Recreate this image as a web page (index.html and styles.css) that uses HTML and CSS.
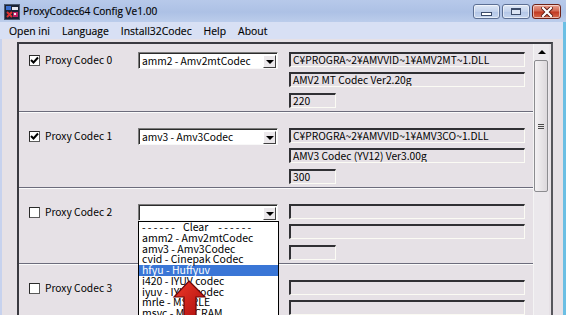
FILE: index.html
```html
<!DOCTYPE html>
<html lang="ja">
<head>
  <meta charset="UTF-8">
  <title>ProxyCodec64 Config Ve1.00</title>
  <link rel="stylesheet" href="styles.css">
</head>
<body>
  <div class="window">
    <div class="titlebar">
      <svg class="app-icon" width="16" height="16" viewBox="0 0 16 16">
        <rect x="0.5" y="0.5" width="15" height="15" fill="#1c2436" stroke="#4a5870"/>
        <rect x="2" y="2" width="5" height="4" fill="#3a6fd0"/>
        <rect x="8" y="3" width="6" height="3" fill="#e8e8f0"/>
        <path d="M3 8 L8 13 M8 8 L3 13" stroke="#e03030" stroke-width="2"/>
        <rect x="9" y="8" width="5" height="5" fill="#c02060"/>
        <rect x="10" y="9" width="2" height="2" fill="#f0f0f0"/>
      </svg>
      <span class="title">ProxyCodec64 Config Ve1.00</span>
      <div class="caption">
        <div class="cap-btn cap-min"><span class="min-bar"></span></div>
        <div class="cap-btn cap-max"><span class="max-box"></span></div>
        <div class="cap-btn cap-close">
          <svg width="12" height="10" viewBox="0 0 12 10">
            <path d="M2 1 L10 9 M10 1 L2 9" stroke="#5a1a12" stroke-width="4" stroke-linecap="square"/>
            <path d="M2 1 L10 9 M10 1 L2 9" stroke="#fff" stroke-width="2.2" stroke-linecap="square"/>
          </svg>
        </div>
      </div>
    </div>

    <div class="menubar">
      <span class="menu-item">Open ini</span>
      <span class="menu-item">Language</span>
      <span class="menu-item">Install32Codec</span>
      <span class="menu-item">Help</span>
      <span class="menu-item">About</span>
    </div>

    <div class="client">
      <div class="panel">
        <div class="codec-list">

          <div class="codec">
            <div class="codec-name"><span class="check on"><svg width="9" height="9" viewBox="0 0 9 9"><path d="M1 4 L3.5 6.5 L8 1.5" fill="none" stroke="#000" stroke-width="2"/></svg></span>Proxy Codec 0</div>
            <div class="combo"><span class="combo-text">amm2 - Amv2mtCodec</span><span class="combo-btn"><i></i></span></div>
            <div class="info">
              <div class="field">C¥PROGRA~2¥AMVVID~1¥AMV2MT~1.DLL</div>
              <div class="field">AMV2 MT Codec Ver2.20g</div>
              <div class="field short">220</div>
            </div>
          </div>

          <div class="codec">
            <div class="codec-name"><span class="check on"><svg width="9" height="9" viewBox="0 0 9 9"><path d="M1 4 L3.5 6.5 L8 1.5" fill="none" stroke="#000" stroke-width="2"/></svg></span>Proxy Codec 1</div>
            <div class="combo"><span class="combo-text">amv3 - Amv3Codec</span><span class="combo-btn"><i></i></span></div>
            <div class="info">
              <div class="field">C¥PROGRA~2¥AMVVID~1¥AMV3CO~1.DLL</div>
              <div class="field">AMV3 Codec (YV12) Ver3.00g</div>
              <div class="field short">300</div>
            </div>
          </div>

          <div class="codec">
            <div class="codec-name"><span class="check"></span>Proxy Codec 2</div>
            <div class="combo open">
              <span class="combo-text"></span><span class="combo-btn"><i></i></span>
              <ul class="dropdown">
                <li class="sep"><span class="dash">------</span><span class="clear">Clear</span><span class="dash">------</span></li>
                <li>amm2 - Amv2mtCodec</li>
                <li>amv3 - Amv3Codec</li>
                <li>cvid - Cinepak Codec</li>
                <li class="selected">hfyu - Huffyuv</li>
                <li>i420 - IYUV codec</li>
                <li>iyuv - IYUV codec</li>
                <li>mrle - MS-RLE</li>
                <li>msvc - MS-CRAM</li>
              </ul>
            </div>
            <div class="info">
              <div class="field"></div>
              <div class="field"></div>
              <div class="field short"></div>
            </div>
          </div>

          <div class="codec">
            <div class="codec-name"><span class="check"></span>Proxy Codec 3</div>
            <div class="combo"><span class="combo-text"></span><span class="combo-btn"><i></i></span></div>
            <div class="info">
              <div class="field"></div>
              <div class="field"></div>
              <div class="field short"></div>
            </div>
          </div>

        </div>
        <div class="vscroll">
          <div class="sb-up"><i></i></div>
          <div class="sb-thumb"><span></span><span></span><span></span></div>
        </div>
      </div>
    </div>

    <!-- pointer arrow drawn over the list -->
    <svg class="pointer" width="36" height="40" viewBox="0 0 36 40">
      <defs>
        <linearGradient id="arrowFill" x1="0" y1="0" x2="1" y2="1">
          <stop offset="0" stop-color="#f03a2a"/>
          <stop offset="1" stop-color="#a80c0c"/>
        </linearGradient>
      </defs>
      <path d="M17 1 L33 17 L24 17 L24 40 L12 40 L12 17 L2 17 Z" fill="url(#arrowFill)" stroke="#6a0505" stroke-width="1.2"/>
    </svg>
  </div>
</body>
</html>
```

FILE: styles.css
```css
* { box-sizing: border-box; }
html, body {
  margin: 0;
  padding: 0;
  overflow: hidden;
}
body {
  width: 566px;
  height: 315px;
  background: #e6e1e6;
}

.window {
  position: relative;
  width: 566px;
  height: 315px;
  overflow: hidden;
  font-family: "Open Sans", "Noto Sans", sans-serif;
}

/* title bar */
.titlebar {
  height: 22px;
  display: flex;
  align-items: center;
  padding-left: 4px;
  background: linear-gradient(to bottom, #b7c9ea 0%, #adc1e5 55%, #bccdeb 100%);
}
.app-icon {
  display: block;
  margin-top: 1px;
}
.title {
  margin-left: 3px;
  font-size: 10.1px;
  color: #000;
  -webkit-text-stroke: 0.15px #000;
}
.caption {
  margin-left: auto;
  margin-right: 5px;
  display: flex;
  gap: 2px;
  align-self: flex-start;
  margin-top: 4px;
}
.cap-btn {
  width: 27px;
  height: 15px;
  border: 1px solid #5c6f93;
  border-radius: 3px;
  background: linear-gradient(to bottom, #dfe8f6 0%, #c3d2ec 50%, #b2c5e6 51%, #c6d6ef 100%);
  box-shadow: inset 0 0 0 1px rgba(255, 255, 255, 0.55);
  display: flex;
  align-items: center;
  justify-content: center;
}
.cap-max { width: 28px; }
.cap-close {
  width: 29px;
  border-color: #6e2218;
  background: linear-gradient(to bottom, #eaa090 0%, #d36a54 45%, #c23a22 55%, #d86a4c 100%);
}
.min-bar {
  width: 11px;
  height: 4px;
  margin-top: 4px;
  background: #fff;
  border: 1px solid #3c4c6a;
}
.max-box {
  width: 10px;
  height: 7px;
  border: 1px solid #3c4c6a;
  border-top-width: 2px;
  background: #dbe4f4;
}

/* menu bar */
.menubar {
  height: 17px;
  display: flex;
  align-items: center;
  padding-left: 3px;
  background: #d8e0f4;
  border-right: 3px solid #6bbfe4;
}
.menu-item {
  padding: 0 6px;
  font-size: 10.4px;
  color: #000;
  -webkit-text-stroke: 0.15px #000;
}

/* client */
.client {
  height: 276px;
  padding: 3px 10px 0 15px;
  background: #e6e1e6;
  border-left: 2px solid #c7d2ee;
  border-right: 3px solid #6bbfe4;
}
.panel {
  height: 100%;
  display: flex;
  border-top: 2px solid #3a3a40;
  border-left: 2px solid #3a3a40;
  border-right: 2px solid #56565c;
  padding-right: 2px;
  overflow: hidden;
  font-family: "Noto Sans CJK JP", "Liberation Sans", sans-serif;
  font-size: 10.25px;
  color: #000;
}
.codec-list {
  flex: 1;
  margin-top: -8px;
}
.codec {
  height: 76px;
  display: flex;
  align-items: flex-start;
  padding: 16px 0 0 10px;
  border-bottom: 1px solid #6c6c7c;
  box-shadow: 0 1px 0 #fbfbfb;
}
.codec-name {
  width: 109px;
  display: flex;
  align-items: center;
  gap: 5px;
  margin-top: 2px;
  height: 12px;
  line-height: 12px;
  white-space: nowrap;
}
.check {
  width: 11px;
  height: 11px;
  background: #fff;
  border: 1px solid #5a5a5a;
  border-top-color: #2a2a2a;
  border-left-color: #2a2a2a;
  display: flex;
  align-items: center;
  justify-content: center;
}
.check svg { display: block; }

/* combo box */
.combo {
  position: relative;
  width: 140px;
  height: 17px;
  margin-right: 11px;
  background: #fff;
  border-top: 1px solid #7c7c7c;
  border-left: 1px solid #7c7c7c;
  border-right: 1px solid #f8f8f8;
  border-bottom: 1px solid #f8f8f8;
  box-shadow: inset 1px 1px 0 #2c2c2c;
  display: flex;
  align-items: center;
}
.combo-text {
  flex: 1;
  padding-left: 3px;
  line-height: 13px;
  white-space: nowrap;
}
.combo-btn {
  width: 13px;
  height: 13px;
  margin-right: 1px;
  margin-top: 1px;
  background: #ebe8eb;
  border-top: 1px solid #fff;
  border-left: 1px solid #fff;
  border-right: 1px solid #404040;
  border-bottom: 1px solid #404040;
  display: flex;
  align-items: center;
  justify-content: center;
}
.combo-btn i {
  width: 0;
  height: 0;
  border-left: 4px solid transparent;
  border-right: 4px solid transparent;
  border-top: 4px solid #000;
  margin-top: 1px;
}
.dropdown {
  position: absolute;
  top: 16px;
  left: -1px;
  width: 141px;
  margin: 0;
  padding: 0;
  list-style: none;
  background: #fff;
  border: 1px solid #000;
  z-index: 2;
  font-size: 10.5px;
}
.dropdown li {
  height: 10.75px;
  line-height: 10.75px;
  padding-left: 3px;
  white-space: pre;
}
.dropdown .sep { display: flex; }
.dropdown .dash {
  width: 31px;
  letter-spacing: 2.2px;
}
.dropdown .clear {
  margin: 0 10px 0 10px;
}
.dropdown li.selected {
  background: #3a76d6;
  color: #fff;
}

/* read-only fields */
.info {
  width: 236px;
  display: flex;
  flex-direction: column;
}
.field {
  height: 15px;
  padding-left: 2px;
  line-height: 12px;
  border-top: 2px solid #303034;
  border-left: 2px solid #303034;
  border-right: 1px solid #fbfbf4;
  border-bottom: 1px solid #fbfbf4;
  white-space: nowrap;
  overflow: hidden;
}
.field + .field { margin-top: 5px; }
.field.short {
  width: 47px;
  margin-top: 6px;
}

/* scrollbar */
.vscroll {
  width: 16px;
  background: #ebe8ec;
  border-left: 1px solid #f4f4f4;
}
.sb-up {
  height: 16px;
  display: flex;
  align-items: center;
  justify-content: center;
}
.sb-up i {
  width: 0;
  height: 0;
  border-left: 4px solid transparent;
  border-right: 4px solid transparent;
  border-bottom: 4px solid #000;
}
.sb-thumb {
  height: 132px;
  margin-right: 1px;
  border: 1px solid #8c8c90;
  border-radius: 2px;
  background: linear-gradient(to right, #f4f2f4, #dcd8dc);
  display: flex;
  flex-direction: column;
  align-items: center;
  justify-content: center;
  gap: 1px;
}
.sb-thumb span {
  width: 6px;
  height: 1px;
  background: #4a4a4a;
}

.pointer {
  position: absolute;
  left: 172px;
  top: 280px;
  z-index: 5;
}
```
